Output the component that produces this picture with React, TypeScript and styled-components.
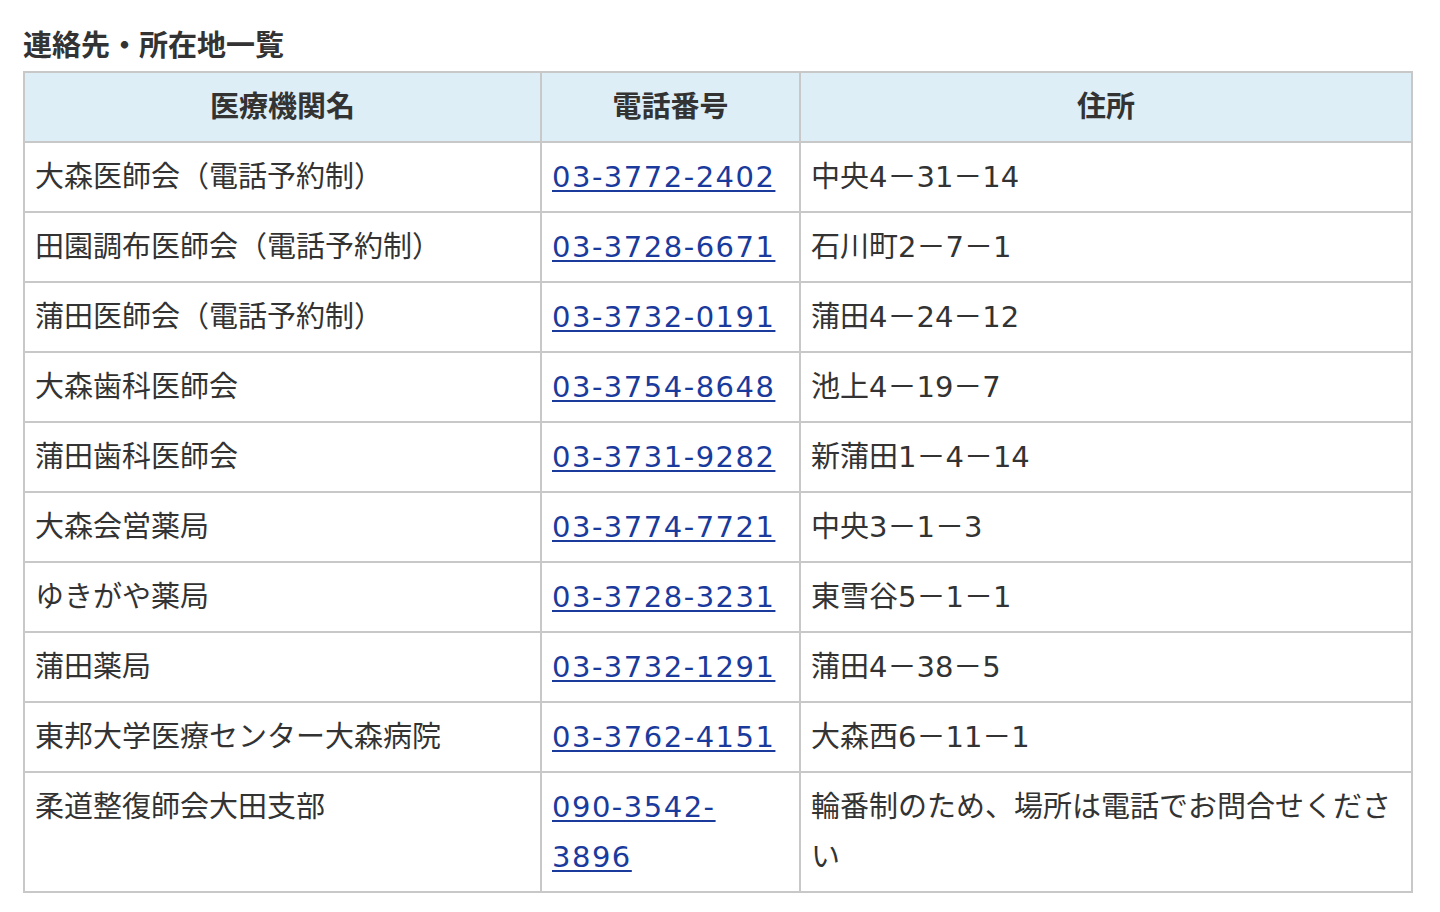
import styled, { createGlobalStyle } from "styled-components";

const GlobalStyle = createGlobalStyle`
  body {
    margin: 0;
    background: #fff;
    font-family: "Noto Sans CJK JP", "Noto Sans", sans-serif;
    color: #333;
  }
`;

type Row = { name: string; tel: string; address: string };

const rows: Row[] = [
  { name: "大森医師会（電話予約制）", tel: "03-3772-2402", address: "中央4－31－14" },
  { name: "田園調布医師会（電話予約制）", tel: "03-3728-6671", address: "石川町2－7－1" },
  { name: "蒲田医師会（電話予約制）", tel: "03-3732-0191", address: "蒲田4－24－12" },
  { name: "大森歯科医師会", tel: "03-3754-8648", address: "池上4－19－7" },
  { name: "蒲田歯科医師会", tel: "03-3731-9282", address: "新蒲田1－4－14" },
  { name: "大森会営薬局", tel: "03-3774-7721", address: "中央3－1－3" },
  { name: "ゆきがや薬局", tel: "03-3728-3231", address: "東雪谷5－1－1" },
  { name: "蒲田薬局", tel: "03-3732-1291", address: "蒲田4－38－5" },
  { name: "東邦大学医療センター大森病院", tel: "03-3762-4151", address: "大森西6－11－1" },
  {
    name: "柔道整復師会大田支部",
    tel: "090-3542-3896",
    address: "輪番制のため、場所は電話でお問合せください",
  },
];

const App = () => {
  return (
    <Page>
      <GlobalStyle />
      <Title>連絡先・所在地一覧</Title>
      <Table>
        <colgroup>
          <col style={{ width: 517 }} />
          <col style={{ width: 259 }} />
          <col />
        </colgroup>
        <thead>
          <tr>
            <Th>医療機関名</Th>
            <Th>電話番号</Th>
            <Th>住所</Th>
          </tr>
        </thead>
        <tbody>
          {rows.map((r) => (
            <tr key={r.tel}>
              <Td>{r.name}</Td>
              <Td>
                <TelLink href={`tel:${r.tel}`}>{r.tel}</TelLink>
              </Td>
              <Td>{r.address}</Td>
            </tr>
          ))}
        </tbody>
      </Table>
    </Page>
  );
};

export default App;

const Page = styled.div`
  padding: 18px 27px 20px 23px;
`;

const Title = styled.h2`
  margin: 0 0 3px;
  font-size: 29px;
  line-height: 50px;
  font-weight: bold;
  color: #333;
`;

// latin digits come from DejaVu (wide, like the original), kanji/kana from Noto CJK
const Table = styled.table`
  width: 100%;
  table-layout: fixed;
  border-collapse: collapse;
  border: 2px solid #c8c8c8;
  font-family: "DejaVu Sans", "Noto Sans CJK JP", sans-serif;
  font-size: 29px;
  line-height: 50px;
`;

const Th = styled.th`
  background: #ddeef7;
  border: 2px solid #c8c8c8;
  padding: 9px 10px;
  font-weight: bold;
  text-align: center;
  color: #333;
`;

const Td = styled.td`
  border: 2px solid #c8c8c8;
  padding: 9px 10px;
  text-align: left;
  vertical-align: top;
  color: #333;
  word-break: break-all;
`;

const TelLink = styled.a`
  letter-spacing: 1.5px;
  color: #1a3a9c;
  text-decoration: underline;
  text-decoration-thickness: 2px;
  text-underline-offset: 3px;
  word-break: normal;
`;
